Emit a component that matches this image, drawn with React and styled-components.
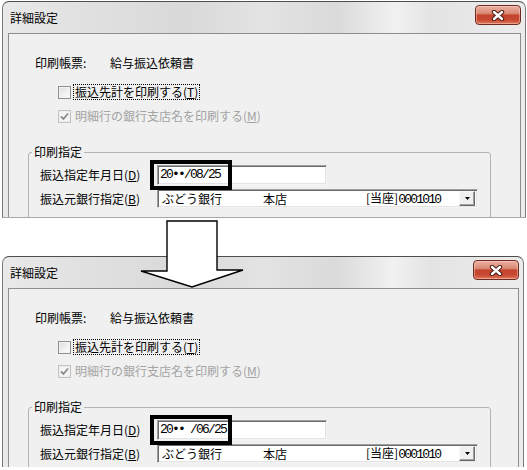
import styled, { createGlobalStyle } from "styled-components";

const GlobalStyle = createGlobalStyle`
  html, body {
    margin: 0;
    padding: 0;
    background: #fff;
  }
  body {
    font-family: "Noto Sans CJK JP", "Liberation Sans", sans-serif;
    font-size: 12px;
    line-height: 16px;
    color: #000;
  }
`;

const Stage = styled.div`
  position: relative;
  width: 527px;
  height: 470px;
  overflow: hidden;
  background: #fff;
`;

const Window = styled.div`
  box-sizing: border-box;
  margin-left: 2px;
  margin-top: ${(p) => p.$top}px;
  width: ${(p) => p.$width}px;
  height: ${(p) => p.$height}px;
  display: flex;
  flex-direction: column;
  overflow: hidden;
  border: 1px solid #4e4e4e;
  border-left-color: #7a7a7a;
  border-right-color: #7a7a7a;
  border-bottom: ${(p) => (p.$bottomLine ? "1px solid #a8a8a8" : "none")};
  border-radius: 7px 7px 0 0;
  background: linear-gradient(
    to right,
    #e9e9e9 0%,
    #e2e2e2 12%,
    #d9d9d9 35%,
    #e3e3e3 50%,
    #dadada 64%,
    #f1f1f1 75%,
    #e4e4e4 82%,
    #ececec 100%
  );
`;

const TitleBar = styled.div`
  height: 31px;
  flex: none;
  display: flex;
  align-items: flex-start;
  padding: 0 4px 0 7px;
`;

const Title = styled.div`
  flex: 1;
  margin-top: 8px;
  font-size: 12px;
  line-height: 16px;
  color: #000;
`;

const CloseButton = styled.div`
  box-sizing: border-box;
  margin-top: 3px;
  width: 46px;
  height: 20px;
  display: flex;
  align-items: center;
  justify-content: center;
  border: 1px solid #6e2a20;
  border-radius: 4px;
  background: linear-gradient(
    #eab0a2 0%,
    #dc8c77 40%,
    #c5432c 52%,
    #c84a32 78%,
    #e07a5e 100%
  );
  box-shadow: inset 0 0 0 1px rgba(255, 220, 210, 0.45);
`;

const Client = styled.div`
  flex: 1;
  min-height: 0;
  margin: 0 4px 0 5px;
  padding-top: 21px;
  border: 1px solid #8e8e8e;
  border-bottom: none;
  background: #f0f0f0;
  overflow: hidden;
`;

const ReportRow = styled.div`
  display: flex;
  padding-left: 26px;
  height: 16px;
`;

const ReportLabel = styled.span`
  width: 75px;
`;

const CheckList = styled.div`
  display: flex;
  flex-direction: column;
  gap: 8px;
  margin-top: 13px;
  padding-left: 49px;
`;

const CheckRow = styled.div`
  display: flex;
  align-items: center;
  height: 16px;
  color: ${(p) => (p.$disabled ? "#a3a3a3" : "#000")};
`;

const CheckBox = styled.span`
  box-sizing: border-box;
  width: 13px;
  height: 13px;
  flex: none;
  display: flex;
  align-items: center;
  justify-content: center;
  border: 1px solid ${(p) => (p.$disabled ? "#c2c2c2" : "#8e8f8f")};
  background: ${(p) =>
    p.$disabled
      ? "#f4f4f4"
      : "linear-gradient(135deg, #dcdcdc 0%, #f2f2f2 60%, #ffffff 100%)"};
  box-shadow: inset 0 0 0 1px ${(p) => (p.$disabled ? "#eeeeee" : "#f4f4f4")};
`;

const CheckText = styled.span`
  margin-left: 2px;
  padding: 0 1px;
  border: 1px dotted ${(p) => (p.$focused ? "#000" : "transparent")};
  line-height: 14px;
`;

const Key = styled.span`
  text-decoration: underline;
  text-underline-offset: 1px;
`;

const Group = styled.fieldset`
  box-sizing: border-box;
  width: 463px;
  margin: 21px 0 0 19px;
  padding: 0 0 30px 11px;
  border: 1px solid #b4b4b4;
  border-radius: 3px;
`;

const Legend = styled.legend`
  margin-left: -8px;
  padding: 0 2px;
  line-height: 14px;
`;

const FieldRow = styled.div`
  display: flex;
  align-items: center;
  margin-top: ${(p) => p.$gap}px;
`;

const FieldLabel = styled.span`
  width: 117px;
  flex: none;
`;

const InputWrap = styled.div`
  position: relative;
`;

const DateInput = styled.div`
  box-sizing: border-box;
  width: 170px;
  height: 20px;
  padding-left: 2px;
  display: flex;
  align-items: center;
  background: #fff;
  border: 1px solid;
  border-color: #a0a0a0 #f4f4f4 #f4f4f4 #a0a0a0;
  box-shadow: inset 1px 1px 0 #6a6a6a, inset -1px -1px 0 #e3e3e3;
`;

const Narrow = styled.span`
  font-family: "Liberation Mono", "DejaVu Sans Mono", monospace;
  font-size: 13px;
  letter-spacing: -1.8px;
  white-space: pre;
`;

const Highlight = styled.div`
  position: absolute;
  left: -7px;
  top: -5px;
  width: 82px;
  height: 30px;
  box-sizing: border-box;
  border: 4px solid #000;
`;

const Combo = styled.div`
  box-sizing: border-box;
  width: 321px;
  height: 19px;
  display: flex;
  align-items: center;
  background: #fff;
  border: 1px solid;
  border-color: #a0a0a0 #f4f4f4 #f4f4f4 #a0a0a0;
  box-shadow: inset 1px 1px 0 #6a6a6a, inset -1px -1px 0 #e3e3e3;
  padding: 0 2px 0 4px;
`;

const ComboCell = styled.span`
  width: ${(p) => p.$w}px;
  flex: none;
  white-space: nowrap;
`;

const DropButton = styled.span`
  box-sizing: border-box;
  margin-left: auto;
  width: 16px;
  height: 15px;
  display: flex;
  align-items: center;
  justify-content: center;
  background: #f0f0f0;
  border: 1px solid;
  border-color: #f8f8f8 #6a6a6a #6a6a6a #f8f8f8;
  box-shadow: inset -1px -1px 0 #a0a0a0;
`;

const ArrowLayer = styled.svg`
  position: absolute;
  left: 0;
  top: 0;
  pointer-events: none;
`;

const CloseGlyph = () => (
  <svg width="14" height="11" viewBox="0 0 14 11">
    <path d="M3 2 L11 9 M11 2 L3 9" stroke="#4a1a12" strokeWidth="4.4" strokeLinecap="round" />
    <path d="M3 2 L11 9 M11 2 L3 9" stroke="#fff" strokeWidth="2.4" strokeLinecap="round" />
  </svg>
);

const CheckMark = () => (
  <svg width="9" height="9" viewBox="0 0 9 9">
    <path d="M1 4.5 L3.5 7 L8 1.5" fill="none" stroke="#8c8c8c" strokeWidth="1.8" />
  </svg>
);

const DownTriangle = () => (
  <svg width="5" height="3" viewBox="0 0 5 3">
    <path d="M0 0 H5 L2.5 3 Z" fill="#000" />
  </svg>
);

const Dialog = ({ top, width, height, date, bottomLine }) => (
  <Window $top={top} $width={width} $height={height} $bottomLine={bottomLine}>
    <TitleBar>
      <Title>詳細設定</Title>
      <CloseButton>
        <CloseGlyph />
      </CloseButton>
    </TitleBar>
    <Client>
      <ReportRow>
        <ReportLabel>印刷帳票:</ReportLabel>
        <span>給与振込依頼書</span>
      </ReportRow>
      <CheckList>
        <CheckRow>
          <CheckBox />
          <CheckText $focused>
            振込先計を印刷する(<Key>T</Key>)
          </CheckText>
        </CheckRow>
        <CheckRow $disabled>
          <CheckBox $disabled>
            <CheckMark />
          </CheckBox>
          <CheckText>
            明細行の銀行支店名を印刷する(<Key>M</Key>)
          </CheckText>
        </CheckRow>
      </CheckList>
      <Group>
        <Legend>印刷指定</Legend>
        <FieldRow $gap={6}>
          <FieldLabel>
            振込指定年月日(<Key>D</Key>)
          </FieldLabel>
          <InputWrap>
            <DateInput>
              <Narrow>{date}</Narrow>
            </DateInput>
            <Highlight />
          </InputWrap>
        </FieldRow>
        <FieldRow $gap={4}>
          <FieldLabel>
            振込元銀行指定(<Key>B</Key>)
          </FieldLabel>
          <Combo>
            <ComboCell $w={101}>ぶどう銀行</ComboCell>
            <ComboCell $w={103}>本店</ComboCell>
            <ComboCell $w={90}>
              [当座]<Narrow>0001010</Narrow>
            </ComboCell>
            <DropButton>
              <DownTriangle />
            </DropButton>
          </Combo>
        </FieldRow>
      </Group>
    </Client>
  </Window>
);

export default function App() {
  return (
    <>
      <GlobalStyle />
      <Stage>
        <Dialog top={1} width={524} height={217} date="20••/08/25" bottomLine />
        <Dialog top={38} width={522} height={211} date="20•• /06/25" />
        <ArrowLayer width="527" height="470">
          <path
            d="M167 221 H217 V270 H243 L192 287 L141 271 H167 Z"
            fill="#fff"
            stroke="#000"
            strokeWidth="1.4"
            strokeLinejoin="miter"
          />
        </ArrowLayer>
      </Stage>
    </>
  );
}
